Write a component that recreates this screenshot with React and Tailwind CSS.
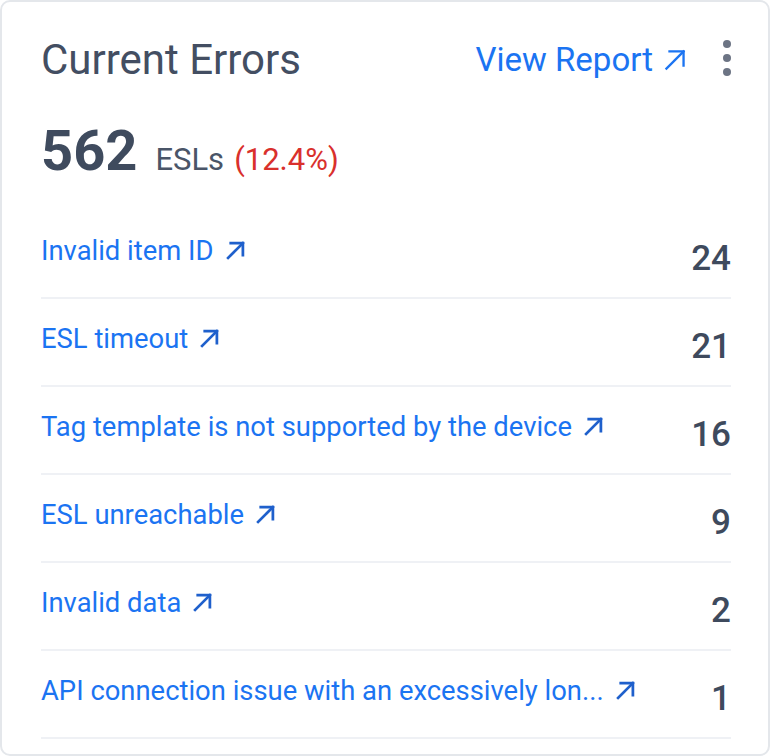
const ERRORS = [
  { label: "Invalid item ID", count: 24 },
  { label: "ESL timeout", count: 21 },
  { label: "Tag template is not supported by the device", count: 16 },
  { label: "ESL unreachable", count: 9 },
  { label: "Invalid data", count: 2 },
  { label: "API connection issue with an excessively lon...", count: 1 },
];

function ArrowIcon({ className, size = 18, stroke = 2.2 }) {
  return (
    <svg
      width={size}
      height={size}
      viewBox="0 0 18 18"
      fill="none"
      stroke="currentColor"
      strokeWidth={stroke}
      strokeLinecap="square"
      className={className}
    >
      <path d="M2 16L16 2" />
      <path d="M4.5 2H16V13.5" />
    </svg>
  );
}

export default function App() {
  return (
    <div
      className="w-[770px] bg-white border-2 border-[#e4e7eb] rounded-[10px] pl-[39px] pr-[37px] pt-[38px] pb-[15px]"
      style={{ fontFamily: "Roboto, 'Liberation Sans', sans-serif" }}
    >
      {/* Header */}
      <div className="flex items-start justify-between">
        <h2 className="text-[42px] leading-[40px] text-[#434e62] font-normal">
          Current Errors
        </h2>
        <div className="flex items-center">
          <a className="flex items-center gap-[11px] text-[33px] leading-[40px] text-[#1b74f2]">
            View Report
            <ArrowIcon size={22} stroke={1.9} className="text-[#1b74f2]" />
          </a>
          <div className="ml-[37px] flex flex-col gap-[6px] -mt-[4px]">
            <span className="w-[8px] h-[8px] rounded-full bg-[#6c7484]" />
            <span className="w-[8px] h-[8px] rounded-full bg-[#6c7484]" />
            <span className="w-[8px] h-[8px] rounded-full bg-[#6c7484]" />
          </div>
        </div>
      </div>

      {/* Total */}
      <div className="mt-[43px] flex items-baseline">
        <span className="text-[56px] leading-[56px] font-bold text-[#3f4b5e]">
          562
        </span>
        <span className="ml-[18px] text-[31px] text-[#4a5568]">ESLs</span>
        <span className="ml-[10px] text-[31px] text-[#d9302c]">(12.4%)</span>
      </div>

      {/* Error list */}
      <div className="mt-[27px]">
        {ERRORS.map((e) => (
          <div
            key={e.label}
            className="h-[88px] flex items-start justify-between border-b-2 border-[#eff1f5]"
          >
            <a className="pt-[26px] flex items-center gap-[12px] text-[27.4px] leading-[28px] text-[#1b74f2]">
              <span>{e.label}</span>
              <ArrowIcon size={19} stroke={2.6} className="text-[#1f60cc]" />
            </a>
            <span className="pt-[30px] text-[35px] leading-[35px] font-medium text-[#3e4a5d]">
              {e.count}
            </span>
          </div>
        ))}
      </div>
    </div>
  );
}
